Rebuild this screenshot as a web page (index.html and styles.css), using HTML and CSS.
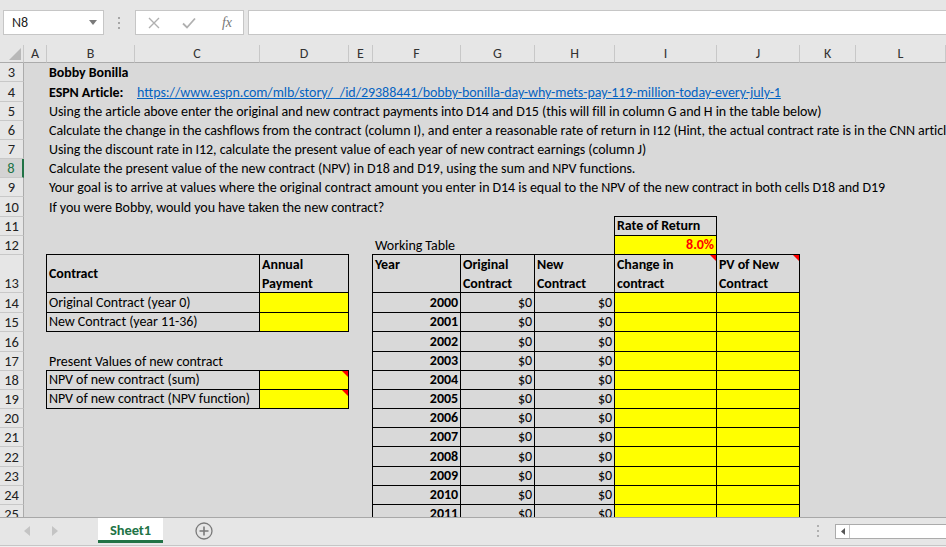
FILE: index.html
```html
<!DOCTYPE html>
<html>
<head>
<meta charset="utf-8">
<link rel="stylesheet" href="styles.css">
</head>
<body>
<div class="app">
  <div class="toolbar">
    <div class="namebox"><span>N8</span><svg width="8" height="5" viewBox="0 0 8 5"><path d="M0 0H8L4 5Z" fill="#7a7a7a"/></svg></div>
    <div class="vdots"><svg width="3" height="12" viewBox="0 0 3 12"><rect x="0" y="0" width="2" height="2" fill="#a6a6a6"/><rect x="0" y="5" width="2" height="2" fill="#a6a6a6"/><rect x="0" y="10" width="2" height="2" fill="#a6a6a6"/></svg></div>
    <div class="fbtns">
      <svg class="ico-x" width="12" height="12" viewBox="0 0 12 12"><path d="M1 1L11 11M11 1L1 11" stroke="#b0b0b0" stroke-width="1.4" fill="none"/></svg>
      <svg class="ico-ok" width="14" height="12" viewBox="0 0 14 12"><path d="M1 6.5L5 10.5L13 1.5" stroke="#b0b0b0" stroke-width="1.8" fill="none"/></svg>
      <span class="fx">fx</span>
    </div>
    <div class="finput"></div>
  </div>

  <div class="sheet">
    <div class="row colhead">
      <div class="corner"><svg width="12" height="12" viewBox="0 0 12 12"><path d="M12 0V12H0Z" fill="#b8b8b8"/></svg></div>
      <div class="ch">A</div><div class="ch">B</div><div class="ch">C</div><div class="ch">D</div><div class="ch">E</div><div class="ch">F</div><div class="ch">G</div><div class="ch">H</div><div class="ch">I</div><div class="ch">J</div><div class="ch">K</div><div class="ch">L</div>
    </div>

    <div class="row h19"><div class="rh">3</div><div class="c cB rest bd">Bobby Bonilla</div></div>
    <div class="row h20"><div class="rh">4</div><div class="c cB bd">ESPN Article:</div><div class="c cC rest"><span class="link">https://www.espn.com/mlb/story/_/id/29388441/bobby-bonilla-day-why-mets-pay-119-million-today-every-july-1</span></div></div>
    <div class="row h19"><div class="rh">5</div><div class="c cB rest">Using the article above enter the original and new contract payments into D14 and D15 (this will fill in column G and H in the table below)</div></div>
    <div class="row h19"><div class="rh">6</div><div class="c cB rest">Calculate the change in the cashflows from the contract (column I), and enter a reasonable rate of return in I12 (Hint, the actual contract rate is in the CNN article)</div></div>
    <div class="row h19"><div class="rh">7</div><div class="c cB rest">Using the discount rate in I12, calculate the present value of each year of new contract earnings (column J)</div></div>
    <div class="row h19"><div class="rh sel">8</div><div class="c cB rest">Calculate the present value of the new contract (NPV) in D18 and D19, using the sum and NPV functions.</div></div>
    <div class="row h19"><div class="rh">9</div><div class="c cB rest">Your goal is to arrive at values where the original contract amount you enter in D14 is equal to the NPV of the new contract in both cells D18 and D19</div></div>
    <div class="row h20"><div class="rh">10</div><div class="c cB rest">If you were Bobby, would you have taken the new contract?</div></div>
    <div class="row h19"><div class="rh">11</div><div class="c cI b bd">Rate of Return</div></div>
    <div class="row h19"><div class="rh">12</div><div class="c cF span3">Working Table</div><div class="c cI b y num red bd">8.0%</div></div>

    <div class="row h38"><div class="rh">13</div>
      <div class="c cBC b bd mid">Contract</div>
      <div class="c cD b bd top">Annual<br>Payment</div>
      <div class="c cF b bd top">Year</div>
      <div class="c cG b bd top">Original<br>Contract</div>
      <div class="c cH b bd top">New<br>Contract</div>
      <div class="c cI b bd top cm">Change in<br>contract</div>
      <div class="c cJ b bd top cm">PV of New<br>Contract</div>
    </div>

    <div class="row h20"><div class="rh">14</div><div class="c cBC b">Original Contract (year 0)</div><div class="c cD b y"></div><div class="c cF b num bd">2000</div><div class="c cG b num">$0</div><div class="c cH b num">$0</div><div class="c cI b y"></div><div class="c cJ b y"></div></div>
    <div class="row h19"><div class="rh">15</div><div class="c cBC b">New Contract (year 11-36)</div><div class="c cD b y"></div><div class="c cF b num bd">2001</div><div class="c cG b num">$0</div><div class="c cH b num">$0</div><div class="c cI b y"></div><div class="c cJ b y"></div></div>
    <div class="row h20"><div class="rh">16</div><div class="c cF b num bd">2002</div><div class="c cG b num">$0</div><div class="c cH b num">$0</div><div class="c cI b y"></div><div class="c cJ b y"></div></div>
    <div class="row h19"><div class="rh">17</div><div class="c cBC span3">Present Values of new contract</div><div class="c cF b num bd">2003</div><div class="c cG b num">$0</div><div class="c cH b num">$0</div><div class="c cI b y"></div><div class="c cJ b y"></div></div>
    <div class="row h19"><div class="rh">18</div><div class="c cBC b">NPV of new contract (sum)</div><div class="c cD b y cm"></div><div class="c cF b num bd">2004</div><div class="c cG b num">$0</div><div class="c cH b num">$0</div><div class="c cI b y"></div><div class="c cJ b y"></div></div>
    <div class="row h19"><div class="rh">19</div><div class="c cBC b">NPV of new contract (NPV function)</div><div class="c cD b y cm"></div><div class="c cF b num bd">2005</div><div class="c cG b num">$0</div><div class="c cH b num">$0</div><div class="c cI b y"></div><div class="c cJ b y"></div></div>
    <div class="row h19"><div class="rh">20</div><div class="c cF b num bd">2006</div><div class="c cG b num">$0</div><div class="c cH b num">$0</div><div class="c cI b y"></div><div class="c cJ b y"></div></div>
    <div class="row h19"><div class="rh">21</div><div class="c cF b num bd">2007</div><div class="c cG b num">$0</div><div class="c cH b num">$0</div><div class="c cI b y"></div><div class="c cJ b y"></div></div>
    <div class="row h20"><div class="rh">22</div><div class="c cF b num bd">2008</div><div class="c cG b num">$0</div><div class="c cH b num">$0</div><div class="c cI b y"></div><div class="c cJ b y"></div></div>
    <div class="row h19"><div class="rh">23</div><div class="c cF b num bd">2009</div><div class="c cG b num">$0</div><div class="c cH b num">$0</div><div class="c cI b y"></div><div class="c cJ b y"></div></div>
    <div class="row h19"><div class="rh">24</div><div class="c cF b num bd">2010</div><div class="c cG b num">$0</div><div class="c cH b num">$0</div><div class="c cI b y"></div><div class="c cJ b y"></div></div>
    <div class="row h19"><div class="rh">25</div><div class="c cF b num bd">2011</div><div class="c cG b num">$0</div><div class="c cH b num">$0</div><div class="c cI b y"></div><div class="c cJ b y"></div></div>
  </div>

  <div class="tabbar">
    <div class="navs">
      <svg width="6" height="10" viewBox="0 0 6 10"><path d="M6 0V10L0 5Z" fill="#c4c4c4"/></svg>
      <svg width="6" height="10" viewBox="0 0 6 10"><path d="M0 0V10L6 5Z" fill="#c4c4c4"/></svg>
    </div>
    <div class="tab">Sheet1</div>
    <div class="addsheet"><svg width="18" height="18" viewBox="0 0 18 18"><circle cx="9" cy="9" r="8" stroke="#7a7a7a" stroke-width="1.3" fill="none"/><path d="M9 4.5V13.5M4.5 9H13.5" stroke="#7a7a7a" stroke-width="1.6"/></svg></div>
    <div class="spacer"></div>
    <div class="hdots"><svg width="3" height="12" viewBox="0 0 3 12"><rect x="0" y="0" width="2" height="2" fill="#b0b0b0"/><rect x="0" y="5" width="2" height="2" fill="#b0b0b0"/><rect x="0" y="10" width="2" height="2" fill="#b0b0b0"/></svg></div>
    <div class="hscroll"><div class="sarrow"><svg width="4" height="7" viewBox="0 0 4 7"><path d="M4 0V7L0 3.5Z" fill="#555"/></svg></div></div>
  </div>
  <div class="bottomstrip"></div>
</div>
</body>
</html>
```

FILE: styles.css
```css
:root {
  --cols: 24px 23px 88px 125px 89px 24px 88px 74px 80px 102px 83px 56px 90px;
}
html, body { margin: 0; padding: 0; }
body {
  font-family: Carlito, Lato, "Liberation Sans", sans-serif;
  font-size: 14px;
  letter-spacing: -0.06px;
  color: #000;
  background: #e6e6e6;
}
.app {
  width: 946px;
  height: 547px;
  overflow: hidden;
  display: flex;
  flex-direction: column;
}

/* toolbar */
.toolbar {
  height: 45px;
  flex: none;
  box-sizing: border-box;
  padding-top: 10px;
  display: flex;
  align-items: flex-start;
  background: #e6e6e6;
}
.namebox {
  margin-left: 3px;
  width: 101px;
  height: 25px;
  box-sizing: border-box;
  border: 1px solid #c6c6c6;
  background: #fff;
  display: flex;
  align-items: center;
  justify-content: space-between;
  padding: 0 6px 0 8px;
  font-size: 14px;
  color: #222;
}
.vdots {
  width: 31px;
  height: 25px;
  display: flex;
  align-items: center;
  justify-content: center;
}
.fbtns {
  width: 109px;
  height: 25px;
  box-sizing: border-box;
  border: 1px solid #c6c6c6;
  background: #fff;
  display: flex;
  align-items: center;
}
.ico-x { margin-left: 12px; }
.ico-ok { margin-left: 22px; }
.fx {
  margin-left: 26px;
  font-family: "Liberation Serif", serif;
  font-style: italic;
  font-size: 14px;
  color: #777;
}
.finput {
  flex: 1;
  margin-left: 4px;
  height: 25px;
  box-sizing: border-box;
  border: 1px solid #c6c6c6;
  border-right: none;
  background: #fff;
}

/* sheet */
.sheet {
  height: 472px;
  flex: none;
  overflow: hidden;
  background: #d9d9d9;
}
.row {
  display: grid;
  grid-template-columns: var(--cols);
  grid-template-rows: 100%;
}
.h19 { height: 19px; }
.h20 { height: 20px; }
.h38 { height: 38px; }

.colhead {
  height: 18px;
  background: #e6e6e6;
}
.corner {
  box-sizing: border-box;
  border-right: 1px solid #c8c8c8;
  border-bottom: 1px solid #ababab;
  display: flex;
  align-items: flex-end;
  justify-content: flex-end;
  padding: 0 2px 2px 0;
}
.ch {
  box-sizing: border-box;
  border-right: 1px solid #c8c8c8;
  border-bottom: 1px solid #ababab;
  text-align: center;
  font-size: 14px;
  line-height: 17px;
  color: #333;
}

.rh {
  grid-column: 1;
  grid-row: 1;
  box-sizing: border-box;
  background: #e6e6e6;
  border-right: 1px solid #ababab;
  border-bottom: 1px solid #c8c8c8;
  display: flex;
  align-items: flex-end;
  justify-content: center;
  line-height: 18px;
  font-size: 14.5px;
  color: #222;
}
.rh.sel {
  color: #217346;
  background: #d3d3d3;
  border-right: 2px solid #217346;
}

/* cells */
.c {
  grid-row: 1;
  box-sizing: border-box;
  white-space: nowrap;
  padding: 0 2px;
  line-height: 19px;
  display: flex;
  align-items: flex-end;
  min-width: 0;
}
.cB { grid-column: 3; }
.cC { grid-column: 4; }
.cD { grid-column: 5; }
.cF { grid-column: 7; }
.cG { grid-column: 8; }
.cH { grid-column: 9; }
.cI { grid-column: 10; }
.cJ { grid-column: 11; }
.cBC { grid-column: 3 / 5; }
.rest { grid-column-end: -1; overflow: hidden; }
.cF.span3 { grid-column: 7 / 10; }
.cBC.span3 { grid-column: 3 / 6; }

.b {
  border: 1px solid #000;
  margin: -1px 0 0 -1px;
  position: relative;
}
.y { background: #ffff00; }
.bd { font-weight: 700; }
.num { justify-content: flex-end; padding-right: 2px; }
.red { color: #ff0000; }
.top { align-items: flex-start; }
.mid { align-items: center; }
.cm::after {
  content: "";
  position: absolute;
  top: 0;
  right: 0;
  width: 0;
  height: 0;
  border-style: solid;
  border-width: 0 6px 6px 0;
  border-color: transparent #ff0000 transparent transparent;
}
.link {
  color: #0563c1;
  text-decoration: underline;
}

/* tab bar */
.tabbar {
  height: 28px;
  flex: none;
  box-sizing: border-box;
  border-top: 1px solid #a8a8a8;
  background: #e6e6e6;
  display: flex;
  align-items: flex-start;
}
.navs {
  width: 98px;
  height: 25px;
  display: flex;
  align-items: center;
  gap: 22px;
  padding-left: 24px;
  box-sizing: border-box;
}
.tab {
  width: 65px;
  height: 25px;
  box-sizing: border-box;
  background: #fff;
  border-bottom: 3px solid #217346;
  color: #217346;
  font-weight: 700;
  font-size: 14.5px;
  display: flex;
  align-items: center;
  justify-content: center;
  padding-top: 2px;
}
.addsheet {
  margin-left: 32px;
  height: 25px;
  display: flex;
  align-items: center;
}
.spacer { flex: 1; }
.hdots {
  height: 25px;
  display: flex;
  align-items: center;
  margin-right: 15px;
}
.hscroll {
  width: 111px;
  height: 15px;
  margin-top: 6px;
  box-sizing: border-box;
  border: 1px solid #ababab;
  border-right: none;
  background: #fff;
  display: flex;
}
.sarrow {
  width: 14px;
  box-sizing: border-box;
  border-right: 1px solid #c6c6c6;
  display: flex;
  align-items: center;
  justify-content: center;
}
.bottomstrip {
  flex: 1;
  border-top: 1px solid #c6c6c6;
  background: #f0f0f0;
}
```
